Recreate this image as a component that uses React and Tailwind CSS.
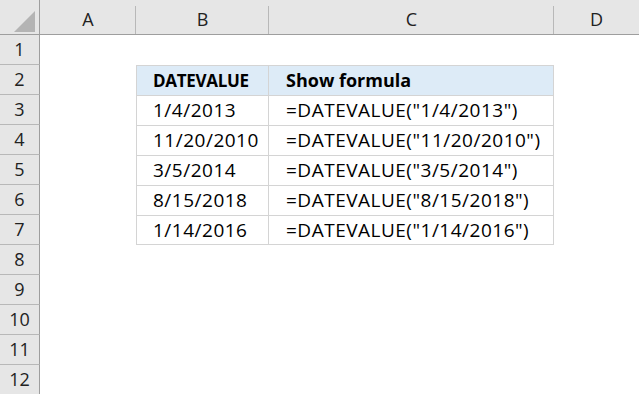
import React from "react";

const cols = ["A", "B", "C", "D"];
const rows = [
  ["1/4/2013", '=DATEVALUE("1/4/2013")'],
  ["11/20/2010", '=DATEVALUE("11/20/2010")'],
  ["3/5/2014", '=DATEVALUE("3/5/2014")'],
  ["8/15/2018", '=DATEVALUE("8/15/2018")'],
  ["1/14/2016", '=DATEVALUE("1/14/2016")'],
];

const font = { fontFamily: "'Open Sans', Lato, sans-serif" };

function ColHeader({ label, last }) {
  return (
    <div className="relative flex items-end justify-center border-b border-[#9e9e9e] bg-[#e6e6e6] pb-[2px] text-[18px] text-[#222]">
      <span className="leading-[26px]">{label}</span>
      {!last && (
        <div className="absolute bottom-0 right-0 h-[28px] w-px bg-[#b8b8b8]" />
      )}
    </div>
  );
}

function RowHeader({ n }) {
  return (
    <div className="flex items-center justify-center border-b border-r border-[#b8b8b8] border-r-[#9e9e9e] bg-[#e6e6e6] text-[18px] text-[#222]">
      {n}
    </div>
  );
}

export default function App() {
  return (
    <div
      className="grid h-[394px] w-[639px] overflow-hidden bg-white"
      style={font}
    >
      <div className="grid grid-cols-[40px_96px_133px_285px_85px] grid-rows-[35px_repeat(12,30px)]">
        {/* corner cell with select-all triangle */}
        <div className="relative border-b border-r border-[#9e9e9e] bg-[#e6e6e6]">
          <svg className="absolute left-[14px] top-[11px]" width="22" height="22" viewBox="0 0 22 22">
            <polygon points="21,0 21,21 0,21" fill="#b4b4b4" />
          </svg>
        </div>
        {cols.map((c, i) => (
          <ColHeader key={c} label={c} last={i === cols.length - 1} />
        ))}

        {Array.from({ length: 12 }, (_, r) => {
          const n = r + 1;
          const cells = [];
          cells.push(<RowHeader key={`h${n}`} n={n} />);
          cells.push(<div key={`a${n}`} />);
          if (n === 2) {
            cells.push(
              <div key="b2" className="flex items-center border-l border-t border-r border-[#d4d4d4] bg-[#ddebf7] pl-[16px] text-[17px] font-bold tracking-[-0.3px] text-black">
                DATEVALUE
              </div>
            );
            cells.push(
              <div key="c2" className="flex items-center border-t border-r border-[#d4d4d4] bg-[#ddebf7] pl-[17px] text-[18px] font-bold text-black">
                Show formula
              </div>
            );
          } else if (n >= 3 && n <= 7) {
            const [d, f] = rows[n - 3];
            cells.push(
              <div key={`b${n}`} className={`flex items-center border-l border-r border-t border-[#d4d4d4] pl-[16px] text-[19px] tracking-[0.5px] text-black ${n === 7 ? "border-b" : ""}`}>
                {d}
              </div>
            );
            cells.push(
              <div key={`c${n}`} className={`flex items-center border-r border-t border-[#d4d4d4] pl-[17px] text-[19px] tracking-[0.5px] text-black ${n === 7 ? "border-b" : ""}`}>
                {f}
              </div>
            );
          } else {
            cells.push(<div key={`b${n}`} />);
            cells.push(<div key={`c${n}`} />);
          }
          cells.push(<div key={`d${n}`} />);
          return cells;
        })}
      </div>
    </div>
  );
}
